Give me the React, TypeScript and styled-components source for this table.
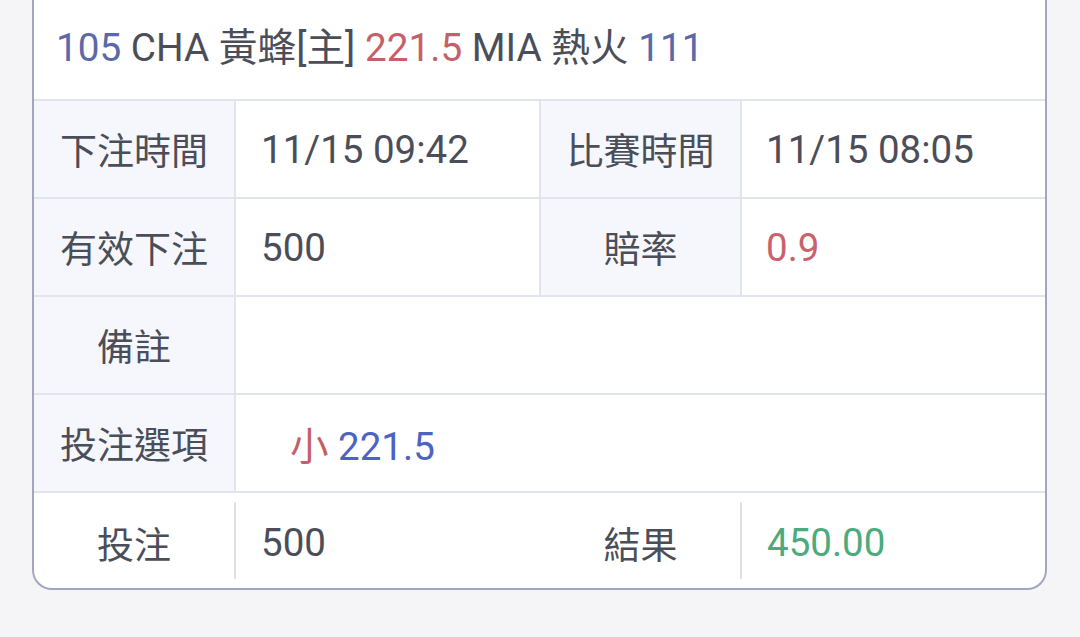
import styled, {createGlobalStyle} from "styled-components";

const GlobalStyle = createGlobalStyle`
    html, body {
        margin: 0;
        padding: 0;
        background: #f5f5f7;
    }
    body {
        font-family: Roboto, "Noto Sans CJK TC", "Noto Sans", sans-serif;
        color: #4b4e58;
    }
`;

const Page = styled.div`
    width: 1080px;
    height: 637px;
    overflow: hidden;
`;

const Card = styled.div`
    margin: 0 33px 0 32px;
    background: #ffffff;
    border: 2px solid #a3a6c2;
    border-top: none;
    border-radius: 0 0 20px 20px;
    overflow: hidden;
`;

const Header = styled.div`
    height: 99px;
    display: flex;
    align-items: center;
    padding: 0 22px 12px;
    box-sizing: border-box;
    font-size: 38.7px;
    white-space: pre;
`;

const Tone = styled.span<{ $c: string }>`
    color: ${p => p.$c};
`;

const Row = styled.div`
    display: grid;
    grid-template-columns: 202px 305px 201px 1fr;
    height: 96px;
    border-top: 2px solid #e1e3ed;
`;

const Label = styled.div`
    display: flex;
    align-items: center;
    justify-content: center;
    font-size: 37px;
    background: #f5f7fc;
    border-right: 2px solid #e1e3ed;
`;

const Value = styled.div<{ $c?: string; $indent?: number; $span?: number; $divider?: boolean }>`
    display: flex;
    align-items: center;
    font-size: 38.5px;
    padding-left: ${p => p.$indent ?? 25}px;
    color: ${p => p.$c ?? "#4b4e58"};
    grid-column: span ${p => p.$span ?? 1};
    border-right: ${p => (p.$divider ? "2px solid #e1e3ed" : "none")};
    white-space: pre;
`;

const FootRow = styled.div`
    display: grid;
    grid-template-columns: 202px 305px 201px 1fr;
    height: 97px;
    border-top: 2px solid #e1e3ed;
    padding: 9px 0 9px;
    box-sizing: border-box;
`;

const FootLabel = styled.div`
    display: flex;
    align-items: center;
    justify-content: center;
    font-size: 37px;
    border-right: 2px solid #dcdfea;
    padding-top: 4px;
`;

const FootValue = styled.div<{ $c?: string }>`
    display: flex;
    align-items: center;
    font-size: 38.5px;
    padding: 4px 0 0 25px;
    color: ${p => p.$c ?? "#4b4e58"};
`;

const BLUE = "#5a69a9";
const RED = "#c65f6a";

export default function App() {
    return (
        <Page>
            <GlobalStyle />
            <Card>
                <Header>
                    <span>
                        <Tone $c={BLUE}>105</Tone> CHA 黃蜂[主] <Tone $c={RED}>221.5</Tone> MIA 熱火{" "}
                        <Tone $c={BLUE}>111</Tone>
                    </span>
                </Header>
                <Row>
                    <Label>下注時間</Label>
                    <Value $divider>11/15 09:42</Value>
                    <Label>比賽時間</Label>
                    <Value $indent={24}>11/15 08:05</Value>
                </Row>
                <Row>
                    <Label>有效下注</Label>
                    <Value $divider>500</Value>
                    <Label>賠率</Label>
                    <Value $indent={24} $c="#c8636d">0.9</Value>
                </Row>
                <Row>
                    <Label>備註</Label>
                    <Value $span={3}></Value>
                </Row>
                <Row>
                    <Label>投注選項</Label>
                    <Value $span={3} $indent={54}>
                        <span>
                            <Tone $c="#c45f69">小</Tone> <Tone $c="#4d63c4">221.5</Tone>
                        </span>
                    </Value>
                </Row>
                <FootRow>
                    <FootLabel>投注</FootLabel>
                    <FootValue>500</FootValue>
                    <FootLabel>結果</FootLabel>
                    <FootValue $c="#4bab7b">450.00</FootValue>
                </FootRow>
            </Card>
        </Page>
    );
}
